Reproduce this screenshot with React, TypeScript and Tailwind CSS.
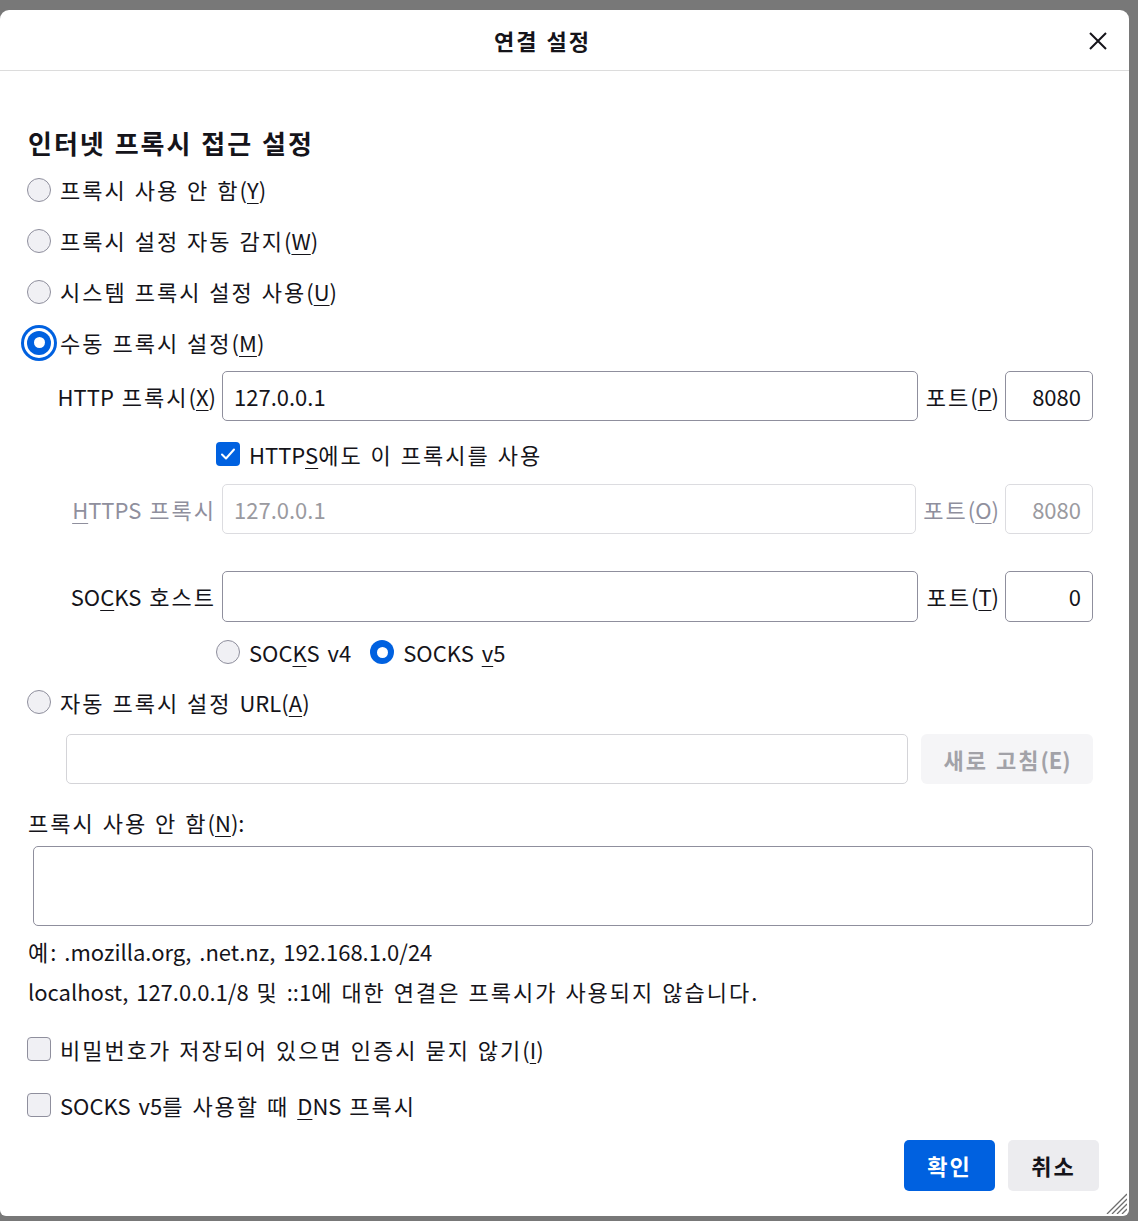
import React from 'react';

// widen hangul runs a little so the Korean text takes the reference width
const k = (s: string) => (
  <span>
    {s.split(/([\uac00-\ud7a3]+)/).map((part, i) =>
      /[\uac00-\ud7a3]/.test(part) ? (
        <span key={i} className="tracking-[2px]">
          {part}
        </span>
      ) : (
        <React.Fragment key={i}>{part}</React.Fragment>
      )
    )}
  </span>
);

const U = ({ children }: { children: React.ReactNode }) => (
  <span className="underline underline-offset-[4px] decoration-[1px]">{children}</span>
);

const Radio = ({ checked = false, focused = false }: { checked?: boolean; focused?: boolean }) => (
  <span
    className={`flex items-center justify-center w-[24px] h-[24px] rounded-full shrink-0 ${
      checked ? 'bg-[#0061e0]' : 'bg-[#f0f0f4] border border-[#8f8f9d]'
    } ${focused ? 'ring-[3px] ring-[#0061e0] ring-offset-[3px] ring-offset-white' : ''}`}
  >
    {checked && <span className="w-[11px] h-[11px] rounded-full bg-white" />}
  </span>
);

const Checkbox = ({ checked = false }: { checked?: boolean }) => (
  <span
    className={`flex items-center justify-center w-[24px] h-[24px] rounded-[4px] shrink-0 ${
      checked ? 'bg-[#0061e0]' : 'bg-[#f0f0f4] border border-[#8f8f9d]'
    }`}
  >
    {checked && (
      <svg width="18" height="18" viewBox="0 0 18 18" fill="none">
        <path d="M3 9.5l4 4 8-9" stroke="white" strokeWidth="2" strokeLinecap="round" strokeLinejoin="round" />
      </svg>
    )}
  </span>
);

const Input = ({ value = '', disabled = false, right = false, className = '' }: { value?: string; disabled?: boolean; right?: boolean; className?: string }) => (
  <div
    className={`h-full flex items-center rounded-[5px] border px-[11px] [word-spacing:0px] ${
      disabled ? 'border-[#dcdce0] text-[#9a9aa0]' : 'border-[#8f8f9d] text-[#15141a]'
    } ${right ? 'justify-end' : ''} ${className}`}
  >
    {value}
  </div>
);

export default function App() {
  return (
    <div className="w-full h-[1221px] bg-[#787878] pt-[10px] font-['Noto_Sans_CJK_KR','Noto_Sans',sans-serif] text-[22px] text-[#15141a] [word-spacing:3px]">
      <div className="relative w-[1129px] h-[1206px] bg-white rounded-t-[9px] rounded-b-[6px] flex flex-col">
        {/* header */}
        <div className="relative h-[61px] shrink-0 border-b border-[#dcdcdc] flex items-center justify-center pr-[44px]">
          <span className="font-bold text-[22px]">{k('연결 설정')}</span>
          <svg className="absolute right-[21px] top-[21px]" width="20" height="20" viewBox="0 0 20 20" fill="none">
            <path d="M2 2l16 16M18 2L2 18" stroke="#15141a" strokeWidth="2" />
          </svg>
        </div>

        <div className="pl-[27px] pr-[36px] pt-[51px] flex flex-col">
          <div className="h-[40px] flex items-center pl-[1px] text-[26px] font-bold">{k('인터넷 프록시 접근 설정')}</div>

          <div className="mt-[2px] h-[51px] flex items-center gap-[9px]">
            <Radio />
            <span>{k('프록시 사용 안 함(')}<U>Y</U>)</span>
          </div>
          <div className="h-[51px] flex items-center gap-[9px]">
            <Radio />
            <span>{k('프록시 설정 자동 감지(')}<U>W</U>)</span>
          </div>
          <div className="h-[51px] flex items-center gap-[9px]">
            <Radio />
            <span>{k('시스템 프록시 설정 사용(')}<U>U</U>)</span>
          </div>
          <div className="h-[51px] flex items-center gap-[9px]">
            <Radio checked focused />
            <span>{k('수동 프록시 설정(')}<U>M</U>)</span>
          </div>

          {/* HTTP */}
          <div className="mt-[3px] h-[50px] flex items-center">
            <span className="w-[195px] text-right pr-[6px] shrink-0">{k('HTTP 프록시(')}<U>X</U>)</span>
            <Input value="127.0.0.1" className="flex-1" />
            <span className="pl-[8px] pr-[6px]">{k('포트(')}<U>P</U>)</span>
            <Input value="8080" right className="w-[88px]" />
          </div>
          <div className="mt-[8px] h-[50px] flex items-center gap-[9px] pl-[189px]">
            <Checkbox checked />
            <span>HTTP<U>S</U>{k('에도 이 프록시를 사용')}</span>
          </div>
          {/* HTTPS */}
          <div className="mt-[5px] h-[50px] flex items-center text-[#8f8f9d]">
            <span className="w-[195px] text-right pr-[6px] shrink-0">
              <U>H</U>{k('TTPS 프록시')}
            </span>
            <Input value="127.0.0.1" disabled className="flex-1" />
            <span className="pl-[7px] pr-[6px]">{k('포트(')}<U>O</U>)</span>
            <Input value="8080" disabled right className="w-[88px]" />
          </div>

          {/* SOCKS */}
          <div className="mt-[37px] h-[51px] flex items-center">
            <span className="w-[195px] text-right pr-[6px] shrink-0">
              SO<U>C</U>{k('KS 호스트')}
            </span>
            <Input className="flex-1" />
            <span className="pl-[8px] pr-[6px]">{k('포트(')}<U>T</U>)</span>
            <Input value="0" right className="w-[88px]" />
          </div>
          <div className="mt-[5px] h-[50px] flex items-center pl-[189px]">
            <Radio />
            <span className="ml-[9px]">
              SOC<U>K</U>S v4
            </span>
            <span className="ml-[19px]">
              <Radio checked />
            </span>
            <span className="ml-[9px]">
              SOCKS <U>v</U>5
            </span>
          </div>

          <div className="h-[50px] flex items-center gap-[9px]">
            <Radio />
            <span>{k('자동 프록시 설정 URL(')}<U>A</U>)</span>
          </div>
          <div className="mt-[7px] h-[50px] flex items-center pl-[39px] gap-[13px]">
            <Input disabled className="flex-1 !border-[#d4d4d8]" />
            <div className="h-full w-[172px] rounded-[6px] bg-[#f5f5f7] text-[#a2a2a8] font-bold flex items-center justify-center">
              {k('새로 고침(E)')}
            </div>
          </div>

          <div className="mt-[18px] h-[40px] flex items-center pl-[1px]">
            <span>
              {k('프록시 사용 안 함(')}<U>N</U>):
            </span>
          </div>
          <div className="mt-[4px] ml-[6px] h-[80px] rounded-[5px] border border-[#8f8f9d]" />

          <div className="mt-[5px] h-[40px] flex items-center pl-[1px]">{k('예: .mozilla.org, .net.nz, 192.168.1.0/24')}</div>
          <div className="h-[40px] flex items-center pl-[1px]">
            {k('localhost, 127.0.0.1/8 및 ::1에 대한 연결은 프록시가 사용되지 않습니다.')}
          </div>

          <div className="mt-[18px] h-[40px] flex items-center gap-[9px]">
            <Checkbox />
            <span>
              {k('비밀번호가 저장되어 있으면 인증시 묻지 않기(')}<U>I</U>)
            </span>
          </div>
          <div className="mt-[16px] h-[40px] flex items-center gap-[9px]">
            <Checkbox />
            <span>
              {k('SOCKS v5를 사용할 때 ')}<U>D</U>{k('NS 프록시')}
            </span>
          </div>

          <div className="mt-[15px] -mr-[6px] h-[51px] flex justify-end gap-[13px]">
            <button className="w-[91px] h-full rounded-[5px] bg-[#0061e0] text-white font-bold">{k('확인')}</button>
            <button className="w-[91px] h-full rounded-[5px] bg-[#ececef] text-[#15141a] font-bold">{k('취소')}</button>
          </div>
        </div>

        {/* resize grip */}
        <svg className="absolute right-[2px] bottom-[2px]" width="22" height="22" viewBox="0 0 22 22" fill="none">
          <path d="M22 2L2 22M22 7L7 22M22 12L12 22M22 17L17 22" stroke="#6e6e6e" strokeWidth="1.3" />
        </svg>
      </div>
    </div>
  );
}
